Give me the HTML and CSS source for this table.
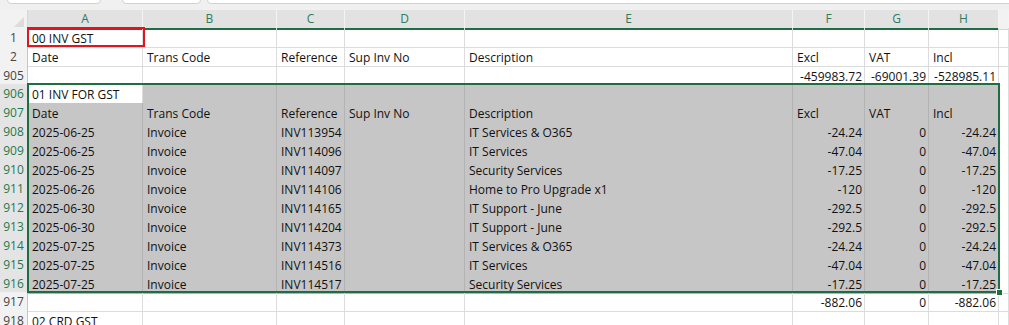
FILE: index.html
```html
<!DOCTYPE html>
<html lang="en">
<head>
  <meta charset="UTF-8" />
  <title>GST workbook</title>
  <link rel="stylesheet" href="styles.css">
</head>
<body>

  <!-- bottom of the formula bar -->
  <div class="toolbar">
    <div class="box name-box"></div>
    <div class="box fx-box"></div>
    <div class="box formula-box"></div>
  </div>

  <div class="sheet">
    <div class="row col-head">
      <div class="corner"></div>
      <div class="ch">A</div>
      <div class="ch">B</div>
      <div class="ch">C</div>
      <div class="ch">D</div>
      <div class="ch">E</div>
      <div class="ch">F</div>
      <div class="ch">G</div>
      <div class="ch">H</div>
      <div class="ch off"></div>
    </div>

    <div class="row">
      <div class="rh">1</div>
      <div class="c">00 INV GST</div><div class="c"></div><div class="c"></div><div class="c"></div>
      <div class="c"></div><div class="c"></div><div class="c"></div><div class="c"></div><div class="c out"></div>
    </div>
    <div class="row">
      <div class="rh">2</div>
      <div class="c">Date</div><div class="c">Trans Code</div><div class="c">Reference</div><div class="c">Sup Inv No</div>
      <div class="c">Description</div><div class="c">Excl</div><div class="c">VAT</div><div class="c">Incl</div><div class="c out"></div>
    </div>
    <div class="row short">
      <div class="rh">905</div>
      <div class="c"></div><div class="c"></div><div class="c"></div><div class="c"></div><div class="c"></div>
      <div class="c num">-459983.72</div><div class="c num">-69001.39</div><div class="c num">-528985.11</div><div class="c out"></div>
    </div>

    <div class="row sel">
      <div class="rh">906</div>
      <div class="c active">01 INV FOR GST</div><div class="c"></div><div class="c"></div><div class="c"></div>
      <div class="c"></div><div class="c"></div><div class="c"></div><div class="c"></div><div class="c out"></div>
    </div>
    <div class="row sel">
      <div class="rh">907</div>
      <div class="c">Date</div><div class="c">Trans Code</div><div class="c">Reference</div><div class="c">Sup Inv No</div>
      <div class="c">Description</div><div class="c">Excl</div><div class="c">VAT</div><div class="c">Incl</div><div class="c out"></div>
    </div>
    <div class="row sel">
      <div class="rh">908</div>
      <div class="c">2025-06-25</div><div class="c">Invoice</div><div class="c">INV113954</div><div class="c"></div>
      <div class="c">IT Services &amp; O365</div><div class="c num">-24.24</div><div class="c num">0</div><div class="c num">-24.24</div><div class="c out"></div>
    </div>
    <div class="row sel">
      <div class="rh">909</div>
      <div class="c">2025-06-25</div><div class="c">Invoice</div><div class="c">INV114096</div><div class="c"></div>
      <div class="c">IT Services</div><div class="c num">-47.04</div><div class="c num">0</div><div class="c num">-47.04</div><div class="c out"></div>
    </div>
    <div class="row sel">
      <div class="rh">910</div>
      <div class="c">2025-06-25</div><div class="c">Invoice</div><div class="c">INV114097</div><div class="c"></div>
      <div class="c">Security Services</div><div class="c num">-17.25</div><div class="c num">0</div><div class="c num">-17.25</div><div class="c out"></div>
    </div>
    <div class="row sel">
      <div class="rh">911</div>
      <div class="c">2025-06-26</div><div class="c">Invoice</div><div class="c">INV114106</div><div class="c"></div>
      <div class="c">Home to Pro Upgrade x1</div><div class="c num">-120</div><div class="c num">0</div><div class="c num">-120</div><div class="c out"></div>
    </div>
    <div class="row sel">
      <div class="rh">912</div>
      <div class="c">2025-06-30</div><div class="c">Invoice</div><div class="c">INV114165</div><div class="c"></div>
      <div class="c">IT Support - June</div><div class="c num">-292.5</div><div class="c num">0</div><div class="c num">-292.5</div><div class="c out"></div>
    </div>
    <div class="row sel">
      <div class="rh">913</div>
      <div class="c">2025-06-30</div><div class="c">Invoice</div><div class="c">INV114204</div><div class="c"></div>
      <div class="c">IT Support - June</div><div class="c num">-292.5</div><div class="c num">0</div><div class="c num">-292.5</div><div class="c out"></div>
    </div>
    <div class="row sel">
      <div class="rh">914</div>
      <div class="c">2025-07-25</div><div class="c">Invoice</div><div class="c">INV114373</div><div class="c"></div>
      <div class="c">IT Services &amp; O365</div><div class="c num">-24.24</div><div class="c num">0</div><div class="c num">-24.24</div><div class="c out"></div>
    </div>
    <div class="row sel">
      <div class="rh">915</div>
      <div class="c">2025-07-25</div><div class="c">Invoice</div><div class="c">INV114516</div><div class="c"></div>
      <div class="c">IT Services</div><div class="c num">-47.04</div><div class="c num">0</div><div class="c num">-47.04</div><div class="c out"></div>
    </div>
    <div class="row sel short">
      <div class="rh">916</div>
      <div class="c">2025-07-25</div><div class="c">Invoice</div><div class="c">INV114517</div><div class="c"></div>
      <div class="c">Security Services</div><div class="c num">-17.25</div><div class="c num">0</div><div class="c num">-17.25</div><div class="c out"></div>
    </div>

    <div class="row">
      <div class="rh">917</div>
      <div class="c"></div><div class="c"></div><div class="c"></div><div class="c"></div><div class="c"></div>
      <div class="c num">-882.06</div><div class="c num">0</div><div class="c num">-882.06</div><div class="c out"></div>
    </div>
    <div class="row">
      <div class="rh">918</div>
      <div class="c">02 CRD GST</div><div class="c"></div><div class="c"></div><div class="c"></div>
      <div class="c"></div><div class="c"></div><div class="c"></div><div class="c"></div><div class="c out"></div>
    </div>

    <!-- overlays -->
    <div class="red-mark"></div>
    <div class="selection"><span class="fill-handle"></span></div>
  </div>

</body>
</html>
```

FILE: styles.css
```css
body {
  margin: 0;
  padding: 0;
  background: #ffffff;
  font-family: 'Open Sans', 'Noto Sans', sans-serif;
  color: #111;
  overflow: hidden;
}

/* Formula bar remains */
.toolbar {
  height: 10px;
  background: #f0f0f0;
  position: relative;
}

.toolbar .box {
  position: absolute;
  top: -6px;
  height: 8px;
  background: #ffffff;
  border: 1px solid #d2d2d2;
  border-radius: 4px;
}

.name-box { left: 7px; width: 92px; }
.fx-box { left: 122px; width: 77px; }
.formula-box { left: 207px; right: -10px; }

/* Grid */
.sheet {
  position: relative;
}

.row {
  display: grid;
  grid-template-columns: 28px 115px 134px 68px 120px 328px 72px 64px 70px 1fr;
  height: 19px;
  font-size: 12px;
}

.row.short {
  height: 18px;
}

.c {
  box-sizing: border-box;
  border-right: 1px solid #dcdcdc;
  border-bottom: 1px solid #dcdcdc;
  padding: 1px 3px 0 4px;
  line-height: 19px;
  white-space: nowrap;
  overflow: hidden;
}

.c.num {
  text-align: right;
  padding-right: 2px;
}

.rh {
  box-sizing: border-box;
  background: #f2f2f2;
  border-right: 1px solid #c6c6c6;
  border-bottom: 1px solid #dadada;
  text-align: center;
  color: #444;
  padding-top: 1px;
  line-height: 18px;
  font-size: 12px;
}

.sel .c {
  background: #c6c6c6;
  border-color: #b3b3b3;
}

.sel .c.active,
.sel .c.out {
  background: #ffffff;
  border-color: #dcdcdc;
}

.sel .rh {
  background: #e4e4e4;
  color: #1f7a4d;
}

/* Column letters */
.col-head {
  height: 18px;
}

.corner {
  background: #f2f2f2;
  border-right: 1px solid #d6d6d6;
  position: relative;
}

.corner::after {
  content: "";
  position: absolute;
  right: 3px;
  bottom: 3px;
  border-left: 10px solid transparent;
  border-bottom: 10px solid #dcdcdc;
}

.ch {
  box-sizing: border-box;
  background: #e2e2e2;
  border-right: 1px solid #f4f4f4;
  border-bottom: 2px solid #1f6e43;
  text-align: center;
  color: #2f7b5c;
  font-size: 12px;
  line-height: 18px;
}

.ch.off {
  background: #f2f2f2;
  border-bottom: 1px solid #d6d6d6;
}

/* Overlays */
.red-mark {
  position: absolute;
  left: 27px;
  top: 17px;
  width: 114px;
  height: 16px;
  border: 2px solid #e3141b;
}

.selection {
  position: absolute;
  left: 27px;
  top: 73px;
  width: 969px;
  height: 206px;
  border: 2px solid #1e6e42;
}

.fill-handle {
  position: absolute;
  right: -5px;
  bottom: -5px;
  width: 5px;
  height: 5px;
  background: #1e6e42;
  border: 1px solid #ffffff;
}
```
